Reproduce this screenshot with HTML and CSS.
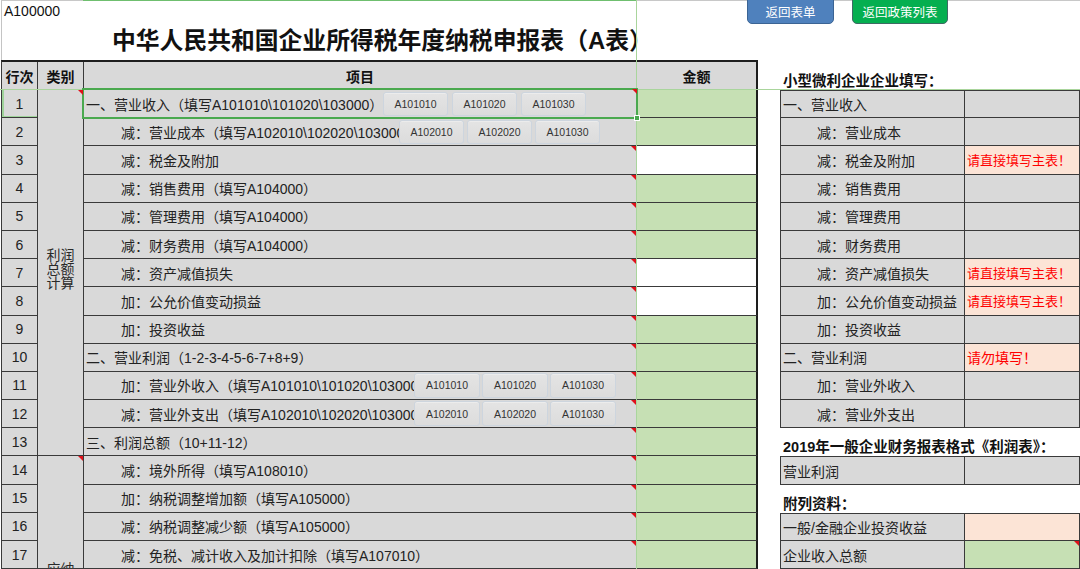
FILE: index.html
```html
<!DOCTYPE html>
<html lang="zh-CN">
<head>
<meta charset="utf-8">
<title>A100000 中华人民共和国企业所得税年度纳税申报表（A表）</title>
<link rel="stylesheet" href="styles.css">
</head>
<body>
<div class="page">
  <header class="top">
    <div class="code">A100000</div>
    <h1 class="title">中华人民共和国企业所得税年度纳税申报表（<span class="latin">A</span>表）</h1>
    <nav class="nav">
      <button class="nav-btn blue" type="button">返回表单</button>
      <button class="nav-btn green" type="button">返回政策列表</button>
    </nav>
  </header>

  <main class="sheet">
    <section class="main-table">
      <div class="hd">行次</div>
      <div class="hd">类别</div>
      <div class="hd">项目</div>
      <div class="hd amt-hd">金额</div>

      <div class="cat cat1 cm">利润<br>总额<br>计算</div>
      <div class="cat cat2 cm"><span class="cat2-text">应纳</span></div>

      <div class="rn rn-sel">1</div>
      <div class="item lv0 selected cm"><span class="t t1">一、营业收入（填写A101010\101020\103000）</span><span class="btns"><span class="cbtn">A101010</span><span class="cbtn">A101020</span><span class="cbtn">A101030</span></span><span class="handle"></span></div>
      <div class="amt g"></div>

      <div class="rn">2</div>
      <div class="item"><span class="t t2">减：营业成本（填写A102010\102020\103000）</span><span class="btns"><span class="cbtn">A102010</span><span class="cbtn">A102020</span><span class="cbtn">A101030</span></span></div>
      <div class="amt g"></div>

      <div class="rn">3</div>
      <div class="item cm">减：税金及附加</div>
      <div class="amt w"></div>

      <div class="rn">4</div>
      <div class="item cm">减：销售费用（填写A104000）</div>
      <div class="amt g"></div>

      <div class="rn">5</div>
      <div class="item cm">减：管理费用（填写A104000）</div>
      <div class="amt g"></div>

      <div class="rn">6</div>
      <div class="item cm">减：财务费用（填写A104000）</div>
      <div class="amt g"></div>

      <div class="rn">7</div>
      <div class="item cm">减：资产减值损失</div>
      <div class="amt w"></div>

      <div class="rn">8</div>
      <div class="item cm">加：公允价值变动损益</div>
      <div class="amt w"></div>

      <div class="rn">9</div>
      <div class="item cm">加：投资收益</div>
      <div class="amt g"></div>

      <div class="rn">10</div>
      <div class="item lv0 cm">二、营业利润（1-2-3-4-5-6-7+8+9）</div>
      <div class="amt g"></div>

      <div class="rn">11</div>
      <div class="item cm"><span class="t t3">加：营业外收入（填写A101010\101020\103000）</span><span class="btns wide"><span class="cbtn">A101010</span><span class="cbtn">A101020</span><span class="cbtn">A101030</span></span></div>
      <div class="amt g"></div>

      <div class="rn">12</div>
      <div class="item cm"><span class="t t3">减：营业外支出（填写A102010\102020\103000）</span><span class="btns wide"><span class="cbtn">A102010</span><span class="cbtn">A102020</span><span class="cbtn">A101030</span></span></div>
      <div class="amt g"></div>

      <div class="rn">13</div>
      <div class="item lv0 cm">三、利润总额（10+11-12）</div>
      <div class="amt g"></div>

      <div class="rn">14</div>
      <div class="item cm">减：境外所得（填写A108010）</div>
      <div class="amt g"></div>

      <div class="rn">15</div>
      <div class="item cm">加：纳税调整增加额（填写A105000）</div>
      <div class="amt g"></div>

      <div class="rn">16</div>
      <div class="item cm">减：纳税调整减少额（填写A105000）</div>
      <div class="amt g"></div>

      <div class="rn">17</div>
      <div class="item cm">减：免税、减计收入及加计扣除（填写A107010）</div>
      <div class="amt g"></div>
    </section>

    <aside class="side">
      <div class="side-h">小型微利企业企业填写：</div>
      <div class="l lv0">一、营业收入</div><div class="v"></div>
      <div class="l">减：营业成本</div><div class="v"></div>
      <div class="l">减：税金及附加</div><div class="v note sm">请直接填写主表！</div>
      <div class="l">减：销售费用</div><div class="v"></div>
      <div class="l">减：管理费用</div><div class="v"></div>
      <div class="l">减：财务费用</div><div class="v"></div>
      <div class="l">减：资产减值损失</div><div class="v note sm">请直接填写主表！</div>
      <div class="l">加：公允价值变动损益</div><div class="v note sm">请直接填写主表！</div>
      <div class="l">加：投资收益</div><div class="v"></div>
      <div class="l lv0">二、营业利润</div><div class="v note">请勿填写！</div>
      <div class="l">加：营业外收入</div><div class="v"></div>
      <div class="l">减：营业外支出</div><div class="v"></div>

      <div class="side-h">2019年一般企业财务报表格式《利润表》：</div>
      <div class="l lv0">营业利润</div><div class="v"></div>

      <div class="side-h">附列资料：</div>
      <div class="l lv0">一般/金融企业投资收益</div><div class="v pink"></div>
      <div class="l lv0">企业收入总额</div><div class="v g cm"></div>
    </aside>
  </main>

  <div class="freeze-v"></div>
  <div class="freeze-h"></div>
</div>
</body>
</html>
```

FILE: styles.css
```css
* { box-sizing: border-box; }

html, body {
  margin: 0;
  padding: 0;
  background: #ffffff;
}

body {
  font-family: "Liberation Sans", "Noto Sans CJK SC", sans-serif;
  font-size: 14px;
  color: #222222;
}

.page {
  position: relative;
  width: 1080px;
  height: 569px;
  overflow: hidden;
  background: #ffffff;
}

/* ---------- top area ---------- */
.top {
  position: relative;
  display: flex;
  align-items: flex-start;
  height: 60px;
  margin-left: 1px;
  border-left: 1px solid #c4c4c4;
  border-top: 1px solid #c8c8c8;
}

.top::before {
  content: "";
  position: absolute;
  left: 81px;
  top: -1px;
  width: 554px;
  height: 1px;
  background: #6fbf6f;
}

.code {
  width: 110px;
  padding: 2px 0 0 2px;
  font-size: 14px;
  line-height: 16px;
  color: #111111;
}

.title {
  width: 635px;
  margin: 28px 0 0 0;
  font-family: "Liberation Sans", "Noto Sans CJK SC", sans-serif;
  font-size: 23.8px;
  line-height: 24px;
  font-weight: 700;
  color: #111111;
  white-space: nowrap;
}

.title .latin {
  font-family: "Liberation Sans", sans-serif;
}

.nav {
  display: flex;
  gap: 18px;
  margin-top: -6px;
}

.nav-btn {
  height: 29px;
  padding: 4px 0 0 0;
  border-radius: 5px;
  color: #ffffff;
  font-family: "Noto Sans CJK SC", sans-serif;
  font-size: 12.5px;
  line-height: 14px;
  text-align: center;
}

.nav-btn.blue {
  width: 87px;
  background: #4f81bd;
  border: 1.5px solid #3b6494;
}

.nav-btn.green {
  width: 96px;
  background: #05af50;
  border: 1.5px solid #3f6a64;
}

/* ---------- sheet ---------- */
.sheet {
  display: flex;
  align-items: flex-start;
}

.main-table {
  display: grid;
  grid-template-columns: 36px 46px 553px 121px;
  grid-template-rows: 28px repeat(17, 28.2px);
  margin-left: 1px;
  border-left: 1px solid #3a3a3a;
  border-top: 2px solid #1e1e1e;
}

.main-table > div {
  border-right: 1px solid #3a3a3a;
  border-bottom: 1px solid #3a3a3a;
  background: #d9d9d9;
  position: relative;
}

.hd {
  display: flex;
  align-items: center;
  justify-content: center;
  font-weight: 700;
  font-size: 14px;
  color: #111111;
}

.main-table > .amt-hd,
.main-table > .amt {
  border-right: 2px solid #1e1e1e;
}

.rn {
  display: flex;
  align-items: center;
  justify-content: center;
  font-size: 14px;
  color: #222222;
}

.rn-sel {
  box-shadow: inset 2px 0 0 #9fd39a, inset 0 -1px 0 #9fd39a;
}

.cat {
  grid-column: 2;
  display: flex;
  justify-content: center;
  text-align: center;
  line-height: 14px;
  font-size: 14px;
  color: #2a2a2a;
}

.cat1 {
  grid-row: 2 / span 13;
  align-items: center;
  padding-bottom: 8px;
}

.main-table > .cat2 {
  grid-row: 15 / span 4;
  align-items: flex-start;
  overflow: hidden;
  padding-top: 106px;
}

.item {
  display: flex;
  align-items: center;
  padding-left: 37px;
  white-space: nowrap;
  overflow: hidden;
  font-size: 14px;
  color: #222222;
}

.item.lv0 {
  padding-left: 2px;
}

/* clipped text before the embedded buttons */
.t {
  flex: none;
  overflow: hidden;
  white-space: nowrap;
}

.t1 { width: 297px; }
.t2 { width: 278px; }
.t3 { width: 293px; }

.main-table > .amt.g { background: #c6e0b4; }
.main-table > .amt.w { background: #ffffff; }

/* selected cell */
.main-table > .selected {
  overflow: visible;
  z-index: 2;
}

.selected::after {
  content: "";
  position: absolute;
  left: -2px;
  top: -2px;
  right: -2px;
  bottom: -2px;
  border: 2px solid #4aa94f;
  pointer-events: none;
}

.handle {
  position: absolute;
  right: -4px;
  bottom: -4px;
  width: 6px;
  height: 6px;
  background: #4aa94f;
  border: 1px solid #ffffff;
  z-index: 4;
}

/* comment indicators */
.cm::before {
  content: "";
  position: absolute;
  top: 0;
  right: 0;
  width: 0;
  height: 0;
  border-top: 5px solid #e0101a;
  border-left: 5px solid transparent;
  z-index: 3;
}

.main-table > .selected::before {
  right: -1px;
  top: -1px;
}

/* embedded command buttons */
.btns {
  flex: none;
  align-self: stretch;
  display: flex;
  gap: 3px;
  padding: 2px 0 1px 0;
}

.selected .btns { gap: 4px; }
.btns.wide { gap: 2px; padding-top: 1px; }

.cbtn {
  width: 65px;
  display: flex;
  align-items: center;
  justify-content: center;
  font-family: "Liberation Sans", sans-serif;
  font-size: 10.5px;
  color: #333333;
  background: linear-gradient(#e4e4e4, #dcdcdc);
  border: 1px solid #cdd5de;
  border-radius: 3px;
  box-shadow: inset 0 1px 0 #ececec;
}

.btns.wide .cbtn { width: 66px; }

/* ---------- side table ---------- */
.side {
  display: grid;
  grid-template-columns: 185px 115px;
  grid-template-rows: 28px repeat(17, 28.2px);
  margin-left: 22px;
  margin-top: 2px;
}

.side-h {
  grid-column: 1 / span 2;
  display: flex;
  align-items: flex-end;
  padding-left: 3px;
  padding-bottom: 0;
  font-weight: 700;
  font-size: 14.5px;
  line-height: 17px;
  color: #111111;
  white-space: nowrap;
}

.l,
.v {
  position: relative;
  display: flex;
  align-items: center;
  background: #d9d9d9;
  border-right: 1px solid #3a3a3a;
  border-bottom: 1px solid #3a3a3a;
  white-space: nowrap;
}

.l {
  border-left: 1px solid #3a3a3a;
  padding-left: 36px;
  font-size: 14px;
  color: #222222;
}

.l.lv0 { padding-left: 2px; }

.side-h + .l,
.side-h + .l + .v {
  border-top: 1px solid #3a3a3a;
}

.v.note {
  background: #fce4d6;
  color: #ff0000;
  font-size: 14px;
  padding-left: 2px;
}

.v.note.sm { font-size: 13px; }

.v.pink { background: #fce4d6; }
.v.g { background: #c6e0b4; }

/* ---------- frozen pane lines ---------- */
.freeze-v {
  position: absolute;
  left: 636px;
  top: 0;
  width: 1px;
  height: 569px;
  background: #a9d59c;
  z-index: 1;
}

.freeze-h {
  position: absolute;
  left: 0;
  top: 89px;
  width: 1080px;
  height: 1px;
  background: #a9d59c;
  z-index: 1;
}
```
